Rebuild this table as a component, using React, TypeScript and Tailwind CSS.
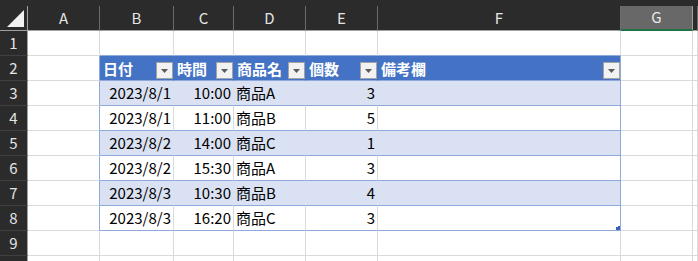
import React from "react";

type Col = { key: string; w: string };

const COLS: Col[] = [
  { key: "A", w: "w-[72px]" },
  { key: "B", w: "w-[74px]" },
  { key: "C", w: "w-[60px]" },
  { key: "D", w: "w-[72px]" },
  { key: "E", w: "w-[72px]" },
  { key: "F", w: "w-[243px]" },
  { key: "G", w: "w-[72px]" },
  { key: "H", w: "flex-1" },
];

const HEAD = ["日付", "時間", "商品名", "個数", "備考欄"];

const DATA: string[][] = [
  ["2023/8/1", "10:00", "商品A", "3", ""],
  ["2023/8/1", "11:00", "商品B", "5", ""],
  ["2023/8/2", "14:00", "商品C", "1", ""],
  ["2023/8/2", "15:30", "商品A", "3", ""],
  ["2023/8/3", "10:30", "商品B", "4", ""],
  ["2023/8/3", "16:20", "商品C", "3", ""],
];

// columns B..E hold right-aligned values for date, time and count
const RIGHT = [true, true, false, true, false];

function FilterButton() {
  return (
    <div className="w-[17px] h-[17px] shrink-0 self-end mb-[1px] border border-[#a3a3a3] bg-[#f2f2f2] flex items-center justify-center">
      <svg width="7" height="4" viewBox="0 0 7 4">
        <polygon points="0,0 7,0 3.5,4" fill="#5a5a5a" />
      </svg>
    </div>
  );
}

function CornerCell() {
  return (
    <div className="relative w-[28px] h-full shrink-0 border-r border-b border-r-[#a0a0a0] border-b-[#a0a0a0]">
      <svg className="absolute left-[7px] top-[4px]" width="17" height="17" viewBox="0 0 17 17">
        <polygon points="17,0 17,17 0,17" fill="#f2f2f2" />
      </svg>
    </div>
  );
}

function RowHeader({ n }: { n: number }) {
  return (
    <div className="w-[28px] h-full shrink-0 bg-[#2b2b2b] border-r border-b border-r-[#a0a0a0] border-b-[#404040] flex items-center justify-center text-[15px] text-[#e4e4e4]">
      {n}
    </div>
  );
}

// Blank gridline cell outside the table
function PlainCell({ col, rightClass, bottomClass }: { col: Col; rightClass: string; bottomClass: string }) {
  return <div className={`${col.w} h-full shrink-0 border-r border-b bg-white ${rightClass} ${bottomClass}`} />;
}

function TableHeaderCell({ col, label, last }: { col: Col; label: string; last: boolean }) {
  return (
    <div
      className={`${col.w} h-full shrink-0 border-r border-b bg-[#4472c4] border-b-[#8ea9db] ${
        last ? "border-r-[#8ea9db]" : "border-r-[#4472c4]"
      } flex justify-between pl-[3px]`}
    >
      <span className="self-center font-bold text-white text-[15px] leading-none">{label}</span>
      <FilterButton />
    </div>
  );
}

function TableDataCell({
  col,
  value,
  right,
  banded,
  last,
  handle,
}: {
  col: Col;
  value: string;
  right: boolean;
  banded: boolean;
  last: boolean;
  handle: boolean;
}) {
  const bg = banded ? "bg-[#d9e1f2]" : "bg-white";
  const rb = last ? "border-r-[#8ea9db]" : banded ? "border-r-[#d9e1f2]" : "border-r-[#dadada]";
  return (
    <div
      className={`relative ${col.w} h-full shrink-0 border-r border-b border-b-[#8ea9db] ${rb} ${bg} flex items-center ${
        right ? "justify-end pr-[2px]" : "justify-start pl-[2px]"
      } text-[15px] text-black`}
    >
      {value}
      {handle && (
        <svg className="absolute right-0 bottom-0" width="4" height="4" viewBox="0 0 4 4">
          <polygon points="2,0 4,0 4,4 0,4 0,1 2,1" fill="#3f5fbf" />
        </svg>
      )}
    </div>
  );
}

function SheetRow({ n }: { n: number }) {
  const inTableRows = n >= 2 && n <= 8;
  return (
    <div className="flex h-[25px]">
      <RowHeader n={n} />
      {COLS.map((col, ci) => {
        const tIdx = ci - 1; // index within the table (B..F)
        const inTableCols = tIdx >= 0 && tIdx <= 4;
        if (inTableRows && inTableCols) {
          if (n === 2) {
            return <TableHeaderCell key={col.key} col={col} label={HEAD[tIdx]} last={tIdx === 4} />;
          }
          const r = n - 3;
          return (
            <TableDataCell
              key={col.key}
              col={col}
              value={DATA[r][tIdx]}
              right={RIGHT[tIdx]}
              banded={r % 2 === 0}
              last={tIdx === 4}
              handle={n === 8 && tIdx === 4}
            />
          );
        }
        const rightClass = inTableRows && col.key === "A" ? "border-r-[#8ea9db]" : "border-r-[#dadada]";
        const bottomClass = n === 1 && inTableCols ? "border-b-[#8ea9db]" : "border-b-[#dadada]";
        return <PlainCell key={col.key} col={col} rightClass={rightClass} bottomClass={bottomClass} />;
      })}
    </div>
  );
}

export default function App() {
  return (
    <div className="w-[698px] h-[261px] overflow-hidden bg-white font-['Noto_Sans_CJK_JP','Noto_Sans',sans-serif]">
      <div className="h-[6px] bg-[#2b2b2b]" />
      <div className="flex h-[25px] bg-[#2b2b2b]">
        <CornerCell />
        {COLS.map((col) =>
          col.key === "G" ? (
            <div
              key={col.key}
              className={`${col.w} h-full shrink-0 bg-[#686868] border-r border-b-2 border-r-[#a0a0a0] border-b-[#1e7145] flex items-center justify-center text-[15px] text-[#eaeaea]`}
            >
              {col.key}
            </div>
          ) : (
            <div
              key={col.key}
              className={`${col.w} h-full shrink-0 border-r border-b border-r-[#6b6b6b] border-b-[#a0a0a0] flex items-center justify-center text-[15px] text-[#e4e4e4]`}
            >
              {col.key === "H" ? "" : col.key}
            </div>
          )
        )}
      </div>
      {[1, 2, 3, 4, 5, 6, 7, 8, 9, 10].map((n) => (
        <SheetRow key={n} n={n} />
      ))}
    </div>
  );
}
